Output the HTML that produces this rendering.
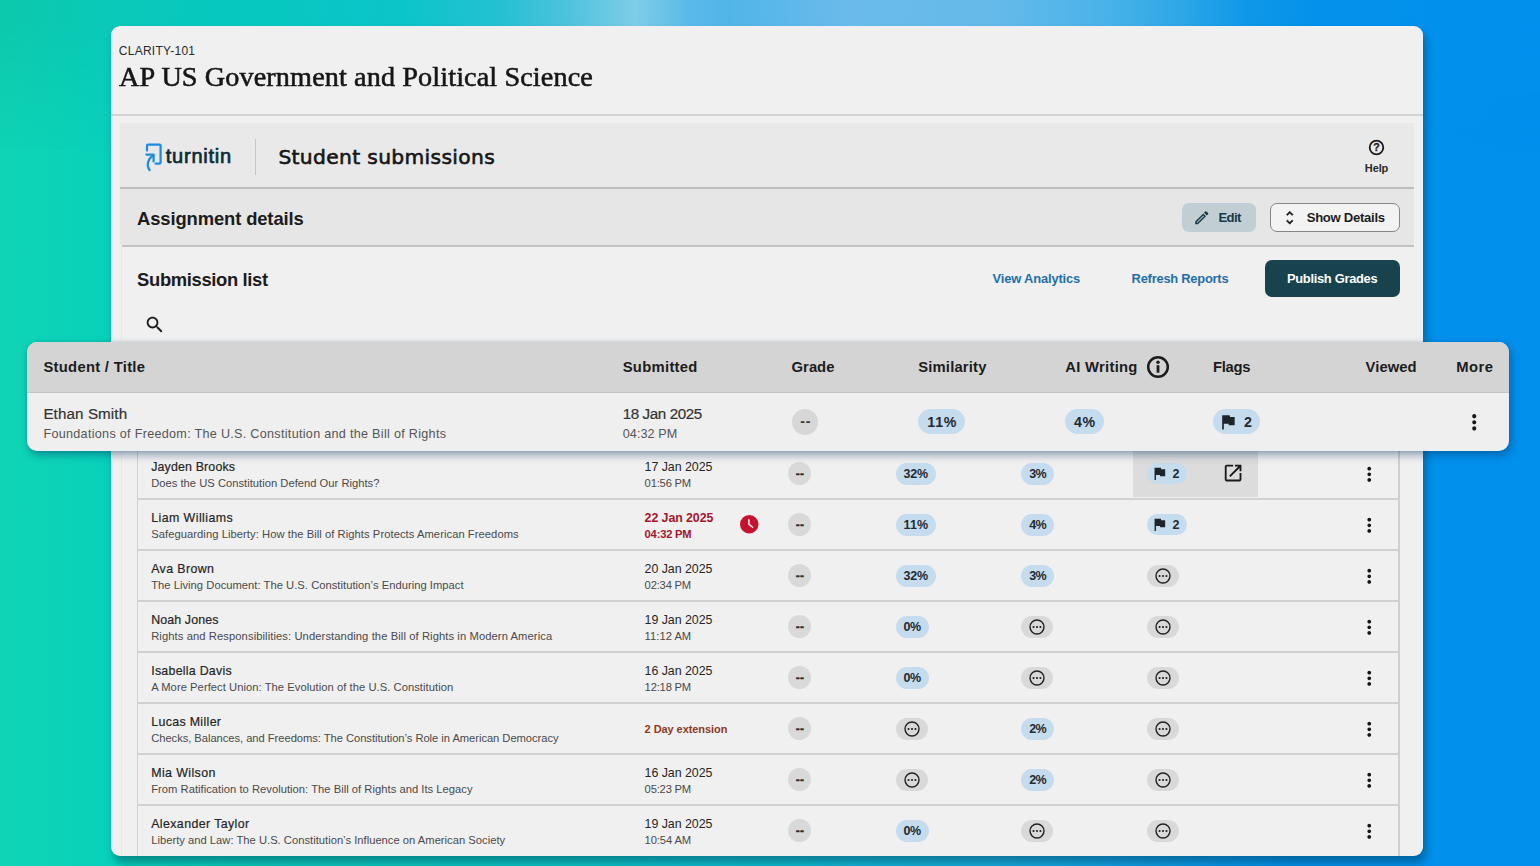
<!DOCTYPE html>
<html lang="en">
<head>
<meta charset="utf-8">
<title>Student submissions</title>
<style>
*{box-sizing:border-box;margin:0;padding:0}
html,body{width:1540px;height:866px;overflow:hidden}
body{position:relative;font-family:"Liberation Sans",sans-serif;color:#1f1f1f;background:linear-gradient(90deg,#10d4b5 0px,#07d1bc 120px,#0ccdbf 300px,#0cc6c9 600px,#10bcd4 800px,#18aee0 1000px,#0f9de7 1150px,#0391eb 1300px,#0190ec 1540px)}
.abs{position:absolute}
.card{left:111px;top:26px;width:1312px;height:830px;background:#f0f0f0;border-radius:9px;box-shadow:3px 7px 8px rgba(0,45,65,.42)}
.t{position:absolute;white-space:nowrap;line-height:1}
.hl{position:absolute;height:2px;background:#cfcfcf}
svg{display:block;overflow:visible}
</style>
</head>
<body>
<div class="abs" style="left:0;top:0;width:1540px;height:150px;background:linear-gradient(90deg,#0cc9ac 0px,#09c9b9 110px,#07c8c0 250px,#0bc5c9 400px,#25c0d3 500px,#4cc2dd 565px,#7ecde8 635px,#5ab9e8 690px,#52b5e8 730px,#6abbec 850px,#64baea 1000px,#4bb3e9 1100px,#2ea7e7 1180px,#0f98e9 1245px,#0391eb 1320px,#0190ec 1540px);-webkit-mask-image:linear-gradient(180deg,#000 0,#000 26px,transparent 160px);mask-image:linear-gradient(180deg,#000 0,#000 26px,transparent 160px)"></div>
<div class="abs card"></div>
<div class="hl" style="left:111px;top:114px;width:1312px;background:#d3d3d3"></div>
<div class="abs" style="left:120px;top:123px;width:1294px;height:64px;background:#e9e9e9"></div>
<div class="abs" style="left:120px;top:188px;width:1294px;height:57px;background:#e6e6e6"></div>
<div class="hl" style="left:120px;top:186.5px;width:1294px;background:#bdbdbd"></div>
<div class="hl" style="left:122px;top:244.5px;width:1292px;background:#c2c2c2"></div>
<div class="abs" style="left:120.8px;top:246px;width:1.4px;height:610px;background:#e8e8e8"></div>
<svg class="abs" style="left:143px;top:141px;" width="22" height="32" viewBox="0 0 22 32"><g fill="none" stroke="#1b8de0" stroke-width="2.25" stroke-linecap="round" stroke-linejoin="round"><path d="M4 9.6V4.6a1 1 0 0 1 1-1H16.6a1 1 0 0 1 1 1V21a1.5 1.5 0 0 1-1.5 1.5H12.6"/><path d="M3.4 13.6H10.6V20.4"/><path d="M10.2 14.2C5.4 17.6 2.8 24 6.6 29"/></g></svg>
<div class="abs" style="left:254.6px;top:138.5px;width:1.6px;height:36px;background:#c6c6c6"></div>
<svg class="abs" style="left:1368.2px;top:139.4px;" width="17" height="17" viewBox="0 0 24 24"><circle cx="12" cy="12" r="9.6" fill="none" stroke="#1c1c1c" stroke-width="2.6"/><text x="12" y="17.4" text-anchor="middle" font-family="Liberation Sans,sans-serif" font-weight="700" font-size="15" fill="#1c1c1c" stroke="#1c1c1c" stroke-width=".4">?</text></svg>
<div class="abs" style="left:1181.5px;top:203px;width:74.5px;height:29px;border-radius:7px;background:#c1ced4"></div>
<svg class="abs" style="left:1192.55px;top:208.85px;" width="17.5" height="17.5" viewBox="0 0 24 24"><path fill="#173a46" d="M14.06 9.02l.92.92L5.92 19H5v-.92l9.06-9.06M17.66 3c-.25 0-.51.1-.7.29l-1.83 1.83 3.75 3.75 1.83-1.83c.39-.39.39-1.02 0-1.41l-2.34-2.34c-.2-.2-.45-.29-.71-.29zm-3.6 3.19L3 17.25V21h3.75L17.81 9.94l-3.75-3.75z"/></svg>
<div class="abs" style="left:1270.3px;top:203px;width:129.4px;height:29px;border-radius:7px;background:#f3f3f3;border:1.5px solid #858585"></div>
<svg class="abs" style="left:1281.35px;top:208.95px;" width="17.5" height="17.5" viewBox="0 0 24 24"><path fill="#1c1c1c" stroke="#1c1c1c" stroke-width=".7" d="M12 5.83L15.17 9l1.41-1.41L12 3 7.41 7.59 8.83 9 12 5.83zm0 12.34L8.83 15l-1.41 1.41L12 21l4.59-4.59L15.17 15 12 18.17z"/></svg>
<div class="abs" style="left:1265px;top:260.3px;width:134.6px;height:36.4px;border-radius:7px;background:#18424e"></div>
<svg class="abs" style="left:143.7px;top:314.2px;" width="21.6" height="21.6" viewBox="0 0 24 24"><path fill="#1a1a1a" d="M15.5 14h-.79l-.28-.27C15.41 12.59 16 11.11 16 9.5 16 5.91 13.09 3 9.5 3S3 5.91 3 9.5 5.91 16 9.5 16c1.61 0 3.09-.59 4.23-1.57l.27.28v.79l5 4.99L20.49 19l-4.99-5zm-6 0C7.01 14 5 11.99 5 9.5S7.01 5 9.5 5 14 7.01 14 9.5 11.99 14 9.5 14z"/></svg>
<div class="abs" style="left:136.7px;top:440px;width:1.6px;height:416px;background:#cfcfcf"></div>
<div class="abs" style="left:1398.4px;top:440px;width:1.6px;height:416px;background:#cfcfcf"></div>
<div class="abs" style="left:1132.7px;top:447.55px;width:125.2px;height:49.839999999999996px;background:#dcdcdc"></div>
<div class="abs" style="left:788.2px;top:461.7px;width:23.2px;height:23.2px;border-radius:50%;background:#d9d9d9"></div>
<div class="abs" style="left:895.6px;top:462.6px;width:40.2px;height:22px;border-radius:11px;background:#c5dcee"></div>
<div class="abs" style="left:1021.2px;top:462.6px;width:33.2px;height:22px;border-radius:11px;background:#c5dcee"></div>
<div class="abs" style="left:1146.8px;top:462.8px;width:39.8px;height:21.2px;border-radius:11px;background:#c5dcee"></div>
<svg class="abs" style="left:1150.8px;top:464.97px;" width="17" height="17" viewBox="0 0 24 24"><path fill="#1d252c" d="M14.4 6L14 4H5v17h2v-7h5.6l.4 2h7V6z"/></svg>
<svg class="abs" style="left:1221.7px;top:462.07px;" width="22.2" height="22.2" viewBox="0 0 24 24"><path fill="#1a1a1a" d="M19 19H5V5h7V3H5c-1.11 0-2 .9-2 2v14c0 1.1.89 2 2 2h14c1.1 0 2-.9 2-2v-7h-2v7zM14 3v2h3.59l-9.83 9.83 1.41 1.41L19 6.41V10h2V3h-7z"/></svg>
<svg class="abs" style="left:1357.85px;top:462.52px;" width="22.5" height="22.5" viewBox="0 0 24 24"><path fill="#151515" d="M12 8c1.1 0 2-.9 2-2s-.9-2-2-2-2 .9-2 2 .9 2 2 2zm0 2c-1.1 0-2 .9-2 2s.9 2 2 2 2-.9 2-2-.9-2-2-2zm0 6c-1.1 0-2 .9-2 2s.9 2 2 2 2-.9 2-2-.9-2-2-2z"/></svg>
<div class="abs" style="left:137.5px;top:498px;width:1261.7px;height:2px;background:#d1d1d1"></div>
<svg class="abs" style="left:739.7px;top:514.9px;" width="18.5" height="18.5" viewBox="0 0 24 24"><circle cx="12" cy="12" r="12" fill="#c5132f"/><path d="M11.5 6.4V11.8L16.3 15.9" fill="none" stroke="#fbe3e7" stroke-width="2.1" stroke-linecap="round" stroke-linejoin="round"/></svg>
<div class="abs" style="left:788.2px;top:512.7px;width:23.2px;height:23.2px;border-radius:50%;background:#d9d9d9"></div>
<div class="abs" style="left:895.6px;top:513.6px;width:40.2px;height:22px;border-radius:11px;background:#c5dcee"></div>
<div class="abs" style="left:1021.2px;top:513.6px;width:33.2px;height:22px;border-radius:11px;background:#c5dcee"></div>
<div class="abs" style="left:1146.8px;top:513.8px;width:39.8px;height:21.2px;border-radius:11px;background:#c5dcee"></div>
<svg class="abs" style="left:1150.8px;top:516.01px;" width="17" height="17" viewBox="0 0 24 24"><path fill="#1d252c" d="M14.4 6L14 4H5v17h2v-7h5.6l.4 2h7V6z"/></svg>
<svg class="abs" style="left:1357.85px;top:513.56px;" width="22.5" height="22.5" viewBox="0 0 24 24"><path fill="#151515" d="M12 8c1.1 0 2-.9 2-2s-.9-2-2-2-2 .9-2 2 .9 2 2 2zm0 2c-1.1 0-2 .9-2 2s.9 2 2 2 2-.9 2-2-.9-2-2-2zm0 6c-1.1 0-2 .9-2 2s.9 2 2 2 2-.9 2-2-.9-2-2-2z"/></svg>
<div class="abs" style="left:137.5px;top:549px;width:1261.7px;height:2px;background:#d1d1d1"></div>
<div class="abs" style="left:788.2px;top:563.7px;width:23.2px;height:23.2px;border-radius:50%;background:#d9d9d9"></div>
<div class="abs" style="left:895.6px;top:564.6px;width:40.2px;height:22px;border-radius:11px;background:#c5dcee"></div>
<div class="abs" style="left:1021.2px;top:564.6px;width:33.2px;height:22px;border-radius:11px;background:#c5dcee"></div>
<div class="abs" style="left:1147.2px;top:564.7px;width:32px;height:22px;border-radius:11px;background:#d9d9d9"></div><svg class="abs" style="left:1154.2px;top:566.75px;" width="18" height="18" viewBox="0 0 24 24"><circle cx="12" cy="12" r="9.3" fill="none" stroke="#222" stroke-width="1.9"/><circle cx="7.4" cy="12" r="1.45" fill="#222"/><circle cx="12" cy="12" r="1.45" fill="#222"/><circle cx="16.6" cy="12" r="1.45" fill="#222"/></svg>
<svg class="abs" style="left:1357.85px;top:564.6px;" width="22.5" height="22.5" viewBox="0 0 24 24"><path fill="#151515" d="M12 8c1.1 0 2-.9 2-2s-.9-2-2-2-2 .9-2 2 .9 2 2 2zm0 2c-1.1 0-2 .9-2 2s.9 2 2 2 2-.9 2-2-.9-2-2-2zm0 6c-1.1 0-2 .9-2 2s.9 2 2 2 2-.9 2-2-.9-2-2-2z"/></svg>
<div class="abs" style="left:137.5px;top:600px;width:1261.7px;height:2px;background:#d1d1d1"></div>
<div class="abs" style="left:788.2px;top:614.8px;width:23.2px;height:23.2px;border-radius:50%;background:#d9d9d9"></div>
<div class="abs" style="left:895.6px;top:615.7px;width:33.2px;height:22px;border-radius:11px;background:#c5dcee"></div>
<div class="abs" style="left:1021.4px;top:615.6px;width:32px;height:22px;border-radius:11px;background:#d9d9d9"></div><svg class="abs" style="left:1028.4px;top:617.59px;" width="18" height="18" viewBox="0 0 24 24"><circle cx="12" cy="12" r="9.3" fill="none" stroke="#222" stroke-width="1.9"/><circle cx="7.4" cy="12" r="1.45" fill="#222"/><circle cx="12" cy="12" r="1.45" fill="#222"/><circle cx="16.6" cy="12" r="1.45" fill="#222"/></svg>
<div class="abs" style="left:1147.2px;top:615.8px;width:32px;height:22px;border-radius:11px;background:#d9d9d9"></div><svg class="abs" style="left:1154.2px;top:617.79px;" width="18" height="18" viewBox="0 0 24 24"><circle cx="12" cy="12" r="9.3" fill="none" stroke="#222" stroke-width="1.9"/><circle cx="7.4" cy="12" r="1.45" fill="#222"/><circle cx="12" cy="12" r="1.45" fill="#222"/><circle cx="16.6" cy="12" r="1.45" fill="#222"/></svg>
<svg class="abs" style="left:1357.85px;top:615.64px;" width="22.5" height="22.5" viewBox="0 0 24 24"><path fill="#151515" d="M12 8c1.1 0 2-.9 2-2s-.9-2-2-2-2 .9-2 2 .9 2 2 2zm0 2c-1.1 0-2 .9-2 2s.9 2 2 2 2-.9 2-2-.9-2-2-2zm0 6c-1.1 0-2 .9-2 2s.9 2 2 2 2-.9 2-2-.9-2-2-2z"/></svg>
<div class="abs" style="left:137.5px;top:651px;width:1261.7px;height:2px;background:#d1d1d1"></div>
<div class="abs" style="left:788.2px;top:665.8px;width:23.2px;height:23.2px;border-radius:50%;background:#d9d9d9"></div>
<div class="abs" style="left:895.6px;top:666.7px;width:33.2px;height:22px;border-radius:11px;background:#c5dcee"></div>
<div class="abs" style="left:1021.4px;top:666.6px;width:32px;height:22px;border-radius:11px;background:#d9d9d9"></div><svg class="abs" style="left:1028.4px;top:668.63px;" width="18" height="18" viewBox="0 0 24 24"><circle cx="12" cy="12" r="9.3" fill="none" stroke="#222" stroke-width="1.9"/><circle cx="7.4" cy="12" r="1.45" fill="#222"/><circle cx="12" cy="12" r="1.45" fill="#222"/><circle cx="16.6" cy="12" r="1.45" fill="#222"/></svg>
<div class="abs" style="left:1147.2px;top:666.8px;width:32px;height:22px;border-radius:11px;background:#d9d9d9"></div><svg class="abs" style="left:1154.2px;top:668.83px;" width="18" height="18" viewBox="0 0 24 24"><circle cx="12" cy="12" r="9.3" fill="none" stroke="#222" stroke-width="1.9"/><circle cx="7.4" cy="12" r="1.45" fill="#222"/><circle cx="12" cy="12" r="1.45" fill="#222"/><circle cx="16.6" cy="12" r="1.45" fill="#222"/></svg>
<svg class="abs" style="left:1357.85px;top:666.68px;" width="22.5" height="22.5" viewBox="0 0 24 24"><path fill="#151515" d="M12 8c1.1 0 2-.9 2-2s-.9-2-2-2-2 .9-2 2 .9 2 2 2zm0 2c-1.1 0-2 .9-2 2s.9 2 2 2 2-.9 2-2-.9-2-2-2zm0 6c-1.1 0-2 .9-2 2s.9 2 2 2 2-.9 2-2-.9-2-2-2z"/></svg>
<div class="abs" style="left:137.5px;top:702px;width:1261.7px;height:2px;background:#d1d1d1"></div>
<div class="abs" style="left:788.2px;top:716.9px;width:23.2px;height:23.2px;border-radius:50%;background:#d9d9d9"></div>
<div class="abs" style="left:895.8px;top:717.7px;width:32px;height:22px;border-radius:11px;background:#d9d9d9"></div><svg class="abs" style="left:902.8px;top:719.67px;" width="18" height="18" viewBox="0 0 24 24"><circle cx="12" cy="12" r="9.3" fill="none" stroke="#222" stroke-width="1.9"/><circle cx="7.4" cy="12" r="1.45" fill="#222"/><circle cx="12" cy="12" r="1.45" fill="#222"/><circle cx="16.6" cy="12" r="1.45" fill="#222"/></svg>
<div class="abs" style="left:1021.2px;top:717.8px;width:33.2px;height:22px;border-radius:11px;background:#c5dcee"></div>
<div class="abs" style="left:1147.2px;top:717.9px;width:32px;height:22px;border-radius:11px;background:#d9d9d9"></div><svg class="abs" style="left:1154.2px;top:719.87px;" width="18" height="18" viewBox="0 0 24 24"><circle cx="12" cy="12" r="9.3" fill="none" stroke="#222" stroke-width="1.9"/><circle cx="7.4" cy="12" r="1.45" fill="#222"/><circle cx="12" cy="12" r="1.45" fill="#222"/><circle cx="16.6" cy="12" r="1.45" fill="#222"/></svg>
<svg class="abs" style="left:1357.85px;top:717.72px;" width="22.5" height="22.5" viewBox="0 0 24 24"><path fill="#151515" d="M12 8c1.1 0 2-.9 2-2s-.9-2-2-2-2 .9-2 2 .9 2 2 2zm0 2c-1.1 0-2 .9-2 2s.9 2 2 2 2-.9 2-2-.9-2-2-2zm0 6c-1.1 0-2 .9-2 2s.9 2 2 2 2-.9 2-2-.9-2-2-2z"/></svg>
<div class="abs" style="left:137.5px;top:753px;width:1261.7px;height:2px;background:#d1d1d1"></div>
<div class="abs" style="left:788.2px;top:767.9px;width:23.2px;height:23.2px;border-radius:50%;background:#d9d9d9"></div>
<div class="abs" style="left:895.8px;top:768.7px;width:32px;height:22px;border-radius:11px;background:#d9d9d9"></div><svg class="abs" style="left:902.8px;top:770.71px;" width="18" height="18" viewBox="0 0 24 24"><circle cx="12" cy="12" r="9.3" fill="none" stroke="#222" stroke-width="1.9"/><circle cx="7.4" cy="12" r="1.45" fill="#222"/><circle cx="12" cy="12" r="1.45" fill="#222"/><circle cx="16.6" cy="12" r="1.45" fill="#222"/></svg>
<div class="abs" style="left:1021.2px;top:768.8px;width:33.2px;height:22px;border-radius:11px;background:#c5dcee"></div>
<div class="abs" style="left:1147.2px;top:768.9px;width:32px;height:22px;border-radius:11px;background:#d9d9d9"></div><svg class="abs" style="left:1154.2px;top:770.91px;" width="18" height="18" viewBox="0 0 24 24"><circle cx="12" cy="12" r="9.3" fill="none" stroke="#222" stroke-width="1.9"/><circle cx="7.4" cy="12" r="1.45" fill="#222"/><circle cx="12" cy="12" r="1.45" fill="#222"/><circle cx="16.6" cy="12" r="1.45" fill="#222"/></svg>
<svg class="abs" style="left:1357.85px;top:768.76px;" width="22.5" height="22.5" viewBox="0 0 24 24"><path fill="#151515" d="M12 8c1.1 0 2-.9 2-2s-.9-2-2-2-2 .9-2 2 .9 2 2 2zm0 2c-1.1 0-2 .9-2 2s.9 2 2 2 2-.9 2-2-.9-2-2-2zm0 6c-1.1 0-2 .9-2 2s.9 2 2 2 2-.9 2-2-.9-2-2-2z"/></svg>
<div class="abs" style="left:137.5px;top:804px;width:1261.7px;height:2px;background:#d1d1d1"></div>
<div class="abs" style="left:788.2px;top:818.9px;width:23.2px;height:23.2px;border-radius:50%;background:#d9d9d9"></div>
<div class="abs" style="left:895.6px;top:819.8px;width:33.2px;height:22px;border-radius:11px;background:#c5dcee"></div>
<div class="abs" style="left:1021.4px;top:819.7px;width:32px;height:22px;border-radius:11px;background:#d9d9d9"></div><svg class="abs" style="left:1028.4px;top:821.75px;" width="18" height="18" viewBox="0 0 24 24"><circle cx="12" cy="12" r="9.3" fill="none" stroke="#222" stroke-width="1.9"/><circle cx="7.4" cy="12" r="1.45" fill="#222"/><circle cx="12" cy="12" r="1.45" fill="#222"/><circle cx="16.6" cy="12" r="1.45" fill="#222"/></svg>
<div class="abs" style="left:1147.2px;top:819.9px;width:32px;height:22px;border-radius:11px;background:#d9d9d9"></div><svg class="abs" style="left:1154.2px;top:821.95px;" width="18" height="18" viewBox="0 0 24 24"><circle cx="12" cy="12" r="9.3" fill="none" stroke="#222" stroke-width="1.9"/><circle cx="7.4" cy="12" r="1.45" fill="#222"/><circle cx="12" cy="12" r="1.45" fill="#222"/><circle cx="16.6" cy="12" r="1.45" fill="#222"/></svg>
<svg class="abs" style="left:1357.85px;top:819.8px;" width="22.5" height="22.5" viewBox="0 0 24 24"><path fill="#151515" d="M12 8c1.1 0 2-.9 2-2s-.9-2-2-2-2 .9-2 2 .9 2 2 2zm0 2c-1.1 0-2 .9-2 2s.9 2 2 2 2-.9 2-2-.9-2-2-2zm0 6c-1.1 0-2 .9-2 2s.9 2 2 2 2-.9 2-2-.9-2-2-2z"/></svg>
<div class="abs" style="left:26.5px;top:342px;width:1482.6px;height:109.2px;border-radius:10px;background:#efefef;box-shadow:2px 4px 9px rgba(10,50,95,.42),0 0 3px rgba(10,50,95,.15)"></div>
<div class="abs" style="left:26.5px;top:342px;width:1482.6px;height:51px;border-radius:10px 10px 0 0;background:#d4d4d4;border-bottom:1.5px solid #c4c4c4"></div>
<svg class="abs" style="left:1146.2px;top:355.3px;" width="24" height="24" viewBox="0 0 24 24"><circle cx="12" cy="12" r="9.8" fill="none" stroke="#1c1c1c" stroke-width="2.5"/><circle cx="12" cy="7.2" r="1.7" fill="#1c1c1c"/><rect x="10.6" y="10.2" width="2.8" height="7.5" fill="#1c1c1c"/></svg>
<div class="abs" style="left:792.2px;top:408.9px;width:26px;height:26px;border-radius:50%;background:#d7d7d7"></div>
<div class="abs" style="left:917.6px;top:409.2px;width:47.6px;height:25.2px;border-radius:13px;background:#c5dcee"></div>
<div class="abs" style="left:1065.3px;top:409.2px;width:39px;height:25.2px;border-radius:13px;background:#c5dcee"></div>
<div class="abs" style="left:1213px;top:409.2px;width:47.2px;height:25.2px;border-radius:13px;background:#c5dcee"></div>
<svg class="abs" style="left:1217.9px;top:412.2px;" width="20" height="20" viewBox="0 0 24 24"><path fill="#1d252c" d="M14.4 6L14 4H5v17h2v-7h5.6l.4 2h7V6z"/></svg>
<svg class="abs" style="left:1462.15px;top:410.35px;" width="24.5" height="24.5" viewBox="0 0 24 24"><path fill="#1a1a1a" d="M12 8c1.1 0 2-.9 2-2s-.9-2-2-2-2 .9-2 2 .9 2 2 2zm0 2c-1.1 0-2 .9-2 2s.9 2 2 2 2-.9 2-2-.9-2-2-2zm0 6c-1.1 0-2 .9-2 2s.9 2 2 2 2-.9 2-2-.9-2-2-2z"/></svg>
<div class="t" style="left:118.80px;top:45.00px;font-size:12px;font-family:'Liberation Sans',sans-serif;font-weight:400;color:#2a2a2a;letter-spacing:0.261px;">CLARITY-101</div>
<div class="t" style="left:119.00px;top:64.00px;font-size:27px;font-family:'Liberation Serif',serif;font-weight:400;color:#161616;letter-spacing:0.101px;transform:scaleX(1.045);transform-origin:0 0;-webkit-text-stroke:0.55px #161616;">AP US Government and Political Science</div>
<div class="t" style="left:165.80px;top:146.00px;font-size:20px;font-family:'Liberation Sans',sans-serif;font-weight:400;color:#0d2a37;letter-spacing:0.767px;-webkit-text-stroke:0.7px #0d2a37;">turnitin</div>
<div class="t" style="left:278.40px;top:147.00px;font-size:20.3px;font-family:'DejaVu Sans','Liberation Sans',sans-serif;font-weight:400;color:#161616;letter-spacing:0.323px;-webkit-text-stroke:0.6px #161616;">Student submissions</div>
<div class="t" style="left:1364.80px;top:163.00px;font-size:11px;font-family:'Liberation Sans',sans-serif;font-weight:700;color:#2a2a2a;letter-spacing:-0.115px;">Help</div>
<div class="t" style="left:137.10px;top:210.00px;font-size:18.4px;font-family:'Liberation Sans',sans-serif;font-weight:700;color:#1c1c1c;letter-spacing:-0.119px;">Assignment details</div>
<div class="t" style="left:1218.40px;top:211.00px;font-size:13.1px;font-family:'Liberation Sans',sans-serif;font-weight:700;color:#173a46;letter-spacing:-0.611px;">Edit</div>
<div class="t" style="left:1306.70px;top:211.00px;font-size:13.1px;font-family:'Liberation Sans',sans-serif;font-weight:700;color:#1e1e1e;letter-spacing:-0.282px;">Show Details</div>
<div class="t" style="left:137.10px;top:271.00px;font-size:18.4px;font-family:'Liberation Sans',sans-serif;font-weight:700;color:#1c1c1c;letter-spacing:-0.352px;">Submission list</div>
<div class="t" style="left:992.50px;top:273.00px;font-size:12.9px;font-family:'Liberation Sans',sans-serif;font-weight:700;color:#1f6fa6;letter-spacing:-0.143px;">View Analytics</div>
<div class="t" style="left:1131.60px;top:273.00px;font-size:12.9px;font-family:'Liberation Sans',sans-serif;font-weight:700;color:#1f6fa6;letter-spacing:-0.235px;">Refresh Reports</div>
<div class="t" style="left:1287.00px;top:273.00px;font-size:12.9px;font-family:'Liberation Sans',sans-serif;font-weight:700;color:#ffffff;letter-spacing:-0.305px;">Publish Grades</div>
<div class="t" style="left:151.20px;top:461.00px;font-size:12.4px;font-family:'Liberation Sans',sans-serif;font-weight:400;color:#262626;letter-spacing:0.153px;-webkit-text-stroke:0.2px #262626;">Jayden Brooks</div>
<div class="t" style="left:151.20px;top:478.00px;font-size:11.2px;font-family:'Liberation Sans',sans-serif;font-weight:400;color:#4a4a4a;letter-spacing:0.016px;">Does the US Constitution Defend Our Rights?</div>
<div class="t" style="left:644.60px;top:461.00px;font-size:12.4px;font-family:'Liberation Sans',sans-serif;font-weight:400;color:#262626;letter-spacing:-0.042px;">17 Jan 2025</div>
<div class="t" style="left:644.60px;top:478.00px;font-size:11.2px;font-family:'Liberation Sans',sans-serif;font-weight:400;color:#4a4a4a;letter-spacing:-0.184px;">01:56 PM</div>
<div class="t" style="left:795.70px;top:468.00px;font-size:12px;font-family:'Liberation Sans',sans-serif;font-weight:700;color:#2c2c2c;letter-spacing:0.200px;-webkit-text-stroke:0.3px #2c2c2c;">--</div>
<div class="t" style="left:903.40px;top:468.00px;font-size:12.5px;font-family:'Liberation Sans',sans-serif;font-weight:700;color:#1f2a33;letter-spacing:-0.116px;">32%</div>
<div class="t" style="left:1029.15px;top:468.00px;font-size:12.5px;font-family:'Liberation Sans',sans-serif;font-weight:700;color:#1f2a33;letter-spacing:-0.578px;">3%</div>
<div class="t" style="left:1172.40px;top:468.00px;font-size:12.5px;font-family:'Liberation Sans',sans-serif;font-weight:700;color:#1f2a33;letter-spacing:-0.153px;">2</div>
<div class="t" style="left:151.20px;top:512.00px;font-size:12.4px;font-family:'Liberation Sans',sans-serif;font-weight:400;color:#262626;letter-spacing:0.423px;-webkit-text-stroke:0.2px #262626;">Liam Williams</div>
<div class="t" style="left:151.20px;top:529.00px;font-size:11.2px;font-family:'Liberation Sans',sans-serif;font-weight:400;color:#4a4a4a;letter-spacing:0.062px;">Safeguarding Liberty: How the Bill of Rights Protects American Freedoms</div>
<div class="t" style="left:644.60px;top:512.00px;font-size:12.4px;font-family:'Liberation Sans',sans-serif;font-weight:700;color:#a3162b;letter-spacing:-0.079px;">22 Jan 2025</div>
<div class="t" style="left:644.60px;top:529.00px;font-size:11.2px;font-family:'Liberation Sans',sans-serif;font-weight:700;color:#a3162b;letter-spacing:-0.202px;">04:32 PM</div>
<div class="t" style="left:795.70px;top:519.00px;font-size:12px;font-family:'Liberation Sans',sans-serif;font-weight:700;color:#2c2c2c;letter-spacing:0.200px;-webkit-text-stroke:0.3px #2c2c2c;">--</div>
<div class="t" style="left:903.40px;top:519.00px;font-size:12.5px;font-family:'Liberation Sans',sans-serif;font-weight:700;color:#1f2a33;letter-spacing:0.228px;">11%</div>
<div class="t" style="left:1029.15px;top:519.00px;font-size:12.5px;font-family:'Liberation Sans',sans-serif;font-weight:700;color:#1f2a33;letter-spacing:-0.578px;">4%</div>
<div class="t" style="left:1172.40px;top:519.00px;font-size:12.5px;font-family:'Liberation Sans',sans-serif;font-weight:700;color:#1f2a33;letter-spacing:-0.153px;">2</div>
<div class="t" style="left:151.20px;top:563.00px;font-size:12.4px;font-family:'Liberation Sans',sans-serif;font-weight:400;color:#262626;letter-spacing:0.375px;-webkit-text-stroke:0.2px #262626;">Ava Brown</div>
<div class="t" style="left:151.20px;top:580.00px;font-size:11.2px;font-family:'Liberation Sans',sans-serif;font-weight:400;color:#4a4a4a;letter-spacing:0.032px;">The Living Document: The U.S. Constitution’s Enduring Impact</div>
<div class="t" style="left:644.60px;top:563.00px;font-size:12.4px;font-family:'Liberation Sans',sans-serif;font-weight:400;color:#262626;letter-spacing:-0.042px;">20 Jan 2025</div>
<div class="t" style="left:644.60px;top:580.00px;font-size:11.2px;font-family:'Liberation Sans',sans-serif;font-weight:400;color:#4a4a4a;letter-spacing:-0.184px;">02:34 PM</div>
<div class="t" style="left:795.70px;top:570.00px;font-size:12px;font-family:'Liberation Sans',sans-serif;font-weight:700;color:#2c2c2c;letter-spacing:0.200px;-webkit-text-stroke:0.3px #2c2c2c;">--</div>
<div class="t" style="left:903.40px;top:570.00px;font-size:12.5px;font-family:'Liberation Sans',sans-serif;font-weight:700;color:#1f2a33;letter-spacing:-0.116px;">32%</div>
<div class="t" style="left:1029.15px;top:570.00px;font-size:12.5px;font-family:'Liberation Sans',sans-serif;font-weight:700;color:#1f2a33;letter-spacing:-0.578px;">3%</div>
<div class="t" style="left:151.20px;top:614.00px;font-size:12.4px;font-family:'Liberation Sans',sans-serif;font-weight:400;color:#262626;letter-spacing:0.118px;-webkit-text-stroke:0.2px #262626;">Noah Jones</div>
<div class="t" style="left:151.20px;top:631.00px;font-size:11.2px;font-family:'Liberation Sans',sans-serif;font-weight:400;color:#4a4a4a;letter-spacing:0.094px;">Rights and Responsibilities: Understanding the Bill of Rights in Modern America</div>
<div class="t" style="left:644.60px;top:614.00px;font-size:12.4px;font-family:'Liberation Sans',sans-serif;font-weight:400;color:#262626;letter-spacing:-0.042px;">19 Jan 2025</div>
<div class="t" style="left:644.60px;top:631.00px;font-size:11.2px;font-family:'Liberation Sans',sans-serif;font-weight:400;color:#4a4a4a;letter-spacing:0.023px;">11:12 AM</div>
<div class="t" style="left:795.70px;top:621.00px;font-size:12px;font-family:'Liberation Sans',sans-serif;font-weight:700;color:#2c2c2c;letter-spacing:0.200px;-webkit-text-stroke:0.3px #2c2c2c;">--</div>
<div class="t" style="left:903.55px;top:621.00px;font-size:12.5px;font-family:'Liberation Sans',sans-serif;font-weight:700;color:#1f2a33;letter-spacing:-0.578px;">0%</div>
<div class="t" style="left:151.20px;top:665.00px;font-size:12.4px;font-family:'Liberation Sans',sans-serif;font-weight:400;color:#262626;letter-spacing:0.258px;-webkit-text-stroke:0.2px #262626;">Isabella Davis</div>
<div class="t" style="left:151.20px;top:682.00px;font-size:11.2px;font-family:'Liberation Sans',sans-serif;font-weight:400;color:#4a4a4a;letter-spacing:0.052px;">A More Perfect Union: The Evolution of the U.S. Constitution</div>
<div class="t" style="left:644.60px;top:665.00px;font-size:12.4px;font-family:'Liberation Sans',sans-serif;font-weight:400;color:#262626;letter-spacing:-0.042px;">16 Jan 2025</div>
<div class="t" style="left:644.60px;top:682.00px;font-size:11.2px;font-family:'Liberation Sans',sans-serif;font-weight:400;color:#4a4a4a;letter-spacing:-0.184px;">12:18 PM</div>
<div class="t" style="left:795.70px;top:672.00px;font-size:12px;font-family:'Liberation Sans',sans-serif;font-weight:700;color:#2c2c2c;letter-spacing:0.200px;-webkit-text-stroke:0.3px #2c2c2c;">--</div>
<div class="t" style="left:903.55px;top:672.00px;font-size:12.5px;font-family:'Liberation Sans',sans-serif;font-weight:700;color:#1f2a33;letter-spacing:-0.578px;">0%</div>
<div class="t" style="left:151.20px;top:716.00px;font-size:12.4px;font-family:'Liberation Sans',sans-serif;font-weight:400;color:#262626;letter-spacing:0.336px;-webkit-text-stroke:0.2px #262626;">Lucas Miller</div>
<div class="t" style="left:151.20px;top:733.00px;font-size:11.2px;font-family:'Liberation Sans',sans-serif;font-weight:400;color:#4a4a4a;letter-spacing:-0.042px;">Checks, Balances, and Freedoms: The Constitution’s Role in American Democracy</div>
<div class="t" style="left:644.60px;top:724.00px;font-size:11px;font-family:'Liberation Sans',sans-serif;font-weight:700;color:#8c3a24;letter-spacing:-0.069px;">2 Day extension</div>
<div class="t" style="left:795.70px;top:723.00px;font-size:12px;font-family:'Liberation Sans',sans-serif;font-weight:700;color:#2c2c2c;letter-spacing:0.200px;-webkit-text-stroke:0.3px #2c2c2c;">--</div>
<div class="t" style="left:1029.15px;top:723.00px;font-size:12.5px;font-family:'Liberation Sans',sans-serif;font-weight:700;color:#1f2a33;letter-spacing:-0.578px;">2%</div>
<div class="t" style="left:151.20px;top:767.00px;font-size:12.4px;font-family:'Liberation Sans',sans-serif;font-weight:400;color:#262626;letter-spacing:0.401px;-webkit-text-stroke:0.2px #262626;">Mia Wilson</div>
<div class="t" style="left:151.20px;top:784.00px;font-size:11.2px;font-family:'Liberation Sans',sans-serif;font-weight:400;color:#4a4a4a;letter-spacing:0.030px;">From Ratification to Revolution: The Bill of Rights and Its Legacy</div>
<div class="t" style="left:644.60px;top:767.00px;font-size:12.4px;font-family:'Liberation Sans',sans-serif;font-weight:400;color:#262626;letter-spacing:-0.042px;">16 Jan 2025</div>
<div class="t" style="left:644.60px;top:784.00px;font-size:11.2px;font-family:'Liberation Sans',sans-serif;font-weight:400;color:#4a4a4a;letter-spacing:-0.184px;">05:23 PM</div>
<div class="t" style="left:795.70px;top:774.00px;font-size:12px;font-family:'Liberation Sans',sans-serif;font-weight:700;color:#2c2c2c;letter-spacing:0.200px;-webkit-text-stroke:0.3px #2c2c2c;">--</div>
<div class="t" style="left:1029.15px;top:774.00px;font-size:12.5px;font-family:'Liberation Sans',sans-serif;font-weight:700;color:#1f2a33;letter-spacing:-0.578px;">2%</div>
<div class="t" style="left:151.20px;top:818.00px;font-size:12.4px;font-family:'Liberation Sans',sans-serif;font-weight:400;color:#262626;letter-spacing:0.395px;-webkit-text-stroke:0.2px #262626;">Alexander Taylor</div>
<div class="t" style="left:151.20px;top:835.00px;font-size:11.2px;font-family:'Liberation Sans',sans-serif;font-weight:400;color:#4a4a4a;letter-spacing:0.016px;">Liberty and Law: The U.S. Constitution’s Influence on American Society</div>
<div class="t" style="left:644.60px;top:818.00px;font-size:12.4px;font-family:'Liberation Sans',sans-serif;font-weight:400;color:#262626;letter-spacing:-0.042px;">19 Jan 2025</div>
<div class="t" style="left:644.60px;top:835.00px;font-size:11.2px;font-family:'Liberation Sans',sans-serif;font-weight:400;color:#4a4a4a;letter-spacing:-0.097px;">10:54 AM</div>
<div class="t" style="left:795.70px;top:825.00px;font-size:12px;font-family:'Liberation Sans',sans-serif;font-weight:700;color:#2c2c2c;letter-spacing:0.200px;-webkit-text-stroke:0.3px #2c2c2c;">--</div>
<div class="t" style="left:903.55px;top:825.00px;font-size:12.5px;font-family:'Liberation Sans',sans-serif;font-weight:700;color:#1f2a33;letter-spacing:-0.578px;">0%</div>
<div class="t" style="left:43.40px;top:360.00px;font-size:14.8px;font-family:'Liberation Sans',sans-serif;font-weight:700;color:#1c1c1c;letter-spacing:0.288px;">Student / Title</div>
<div class="t" style="left:622.70px;top:360.00px;font-size:14.8px;font-family:'Liberation Sans',sans-serif;font-weight:700;color:#1c1c1c;letter-spacing:0.295px;">Submitted</div>
<div class="t" style="left:791.60px;top:360.00px;font-size:14.8px;font-family:'Liberation Sans',sans-serif;font-weight:700;color:#1c1c1c;letter-spacing:0.009px;">Grade</div>
<div class="t" style="left:918.20px;top:360.00px;font-size:14.8px;font-family:'Liberation Sans',sans-serif;font-weight:700;color:#1c1c1c;letter-spacing:0.175px;">Similarity</div>
<div class="t" style="left:1065.30px;top:360.00px;font-size:14.8px;font-family:'Liberation Sans',sans-serif;font-weight:700;color:#1c1c1c;letter-spacing:0.278px;">AI Writing</div>
<div class="t" style="left:1213.00px;top:360.00px;font-size:14.8px;font-family:'Liberation Sans',sans-serif;font-weight:700;color:#1c1c1c;letter-spacing:-0.314px;">Flags</div>
<div class="t" style="left:1365.60px;top:360.00px;font-size:14.8px;font-family:'Liberation Sans',sans-serif;font-weight:700;color:#1c1c1c;letter-spacing:0.053px;">Viewed</div>
<div class="t" style="left:1456.20px;top:360.00px;font-size:14.8px;font-family:'Liberation Sans',sans-serif;font-weight:700;color:#1c1c1c;letter-spacing:0.447px;">More</div>
<div class="t" style="left:43.40px;top:406.00px;font-size:15.2px;font-family:'Liberation Sans',sans-serif;font-weight:400;color:#333;letter-spacing:0.097px;-webkit-text-stroke:0.2px #333;">Ethan Smith</div>
<div class="t" style="left:43.40px;top:428.00px;font-size:12.6px;font-family:'Liberation Sans',sans-serif;font-weight:400;color:#555;letter-spacing:0.297px;">Foundations of Freedom: The U.S. Constitution and the Bill of Rights</div>
<div class="t" style="left:622.70px;top:406.00px;font-size:15.2px;font-family:'Liberation Sans',sans-serif;font-weight:400;color:#333;letter-spacing:-0.401px;-webkit-text-stroke:0.2px #333;">18 Jan 2025</div>
<div class="t" style="left:622.70px;top:428.00px;font-size:12.6px;font-family:'Liberation Sans',sans-serif;font-weight:400;color:#555;letter-spacing:0.099px;">04:32 PM</div>
<div class="t" style="left:800.20px;top:414.00px;font-size:14px;font-family:'Liberation Sans',sans-serif;font-weight:700;color:#3a3a3a;letter-spacing:0.872px;">--</div>
<div class="t" style="left:927.30px;top:415.00px;font-size:14.2px;font-family:'Liberation Sans',sans-serif;font-weight:700;color:#1f2a33;letter-spacing:0.787px;">11%</div>
<div class="t" style="left:1074.00px;top:415.00px;font-size:14.2px;font-family:'Liberation Sans',sans-serif;font-weight:700;color:#1f2a33;letter-spacing:0.684px;">4%</div>
<div class="t" style="left:1243.90px;top:415.00px;font-size:14.2px;font-family:'Liberation Sans',sans-serif;font-weight:700;color:#1f2a33;letter-spacing:-0.291px;">2</div>
</body>
</html>
